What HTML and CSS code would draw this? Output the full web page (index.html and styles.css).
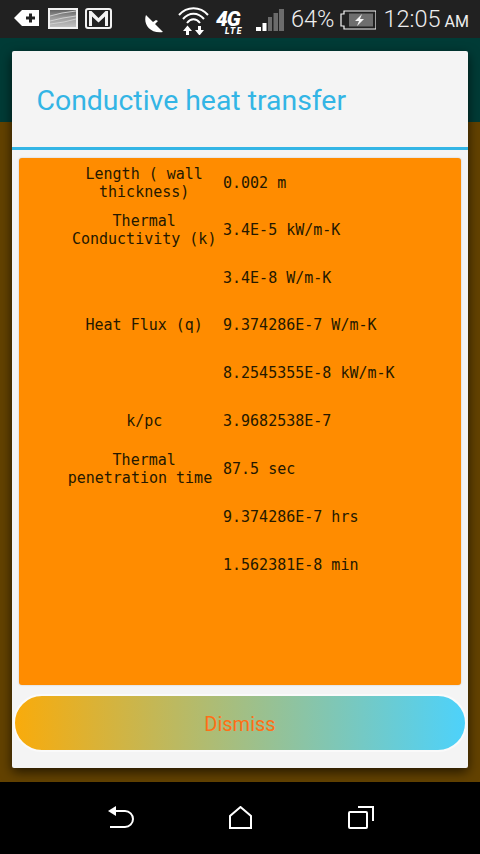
FILE: index.html
```html
<!DOCTYPE html>
<html lang="en">
<head>
<meta charset="utf-8">
<title>Conductive heat transfer</title>
<link rel="stylesheet" href="styles.css">
</head>
<body>
<header class="status">
  <svg class="ic ic-tag" width="26" height="18" viewBox="0 0 26 18"><path d="M8 1h17v16H8L0 9z" fill="#fff"/><path d="M15 4.500h3v3h3v3h-3v3h-3v-3h-3v-3h3z" fill="#222"/></svg>
  <svg class="ic ic-photo" width="30" height="21" viewBox="0 0 30 21"><defs><linearGradient id="ph" x1="0" y1="0" x2="0" y2="1"><stop offset="0" stop-color="#5c5c5c"/><stop offset=".45" stop-color="#9a9a9a"/><stop offset="1" stop-color="#c4c4c4"/></linearGradient></defs><rect x="1" y="1" width="28" height="19" fill="url(#ph)" stroke="#f2f2f2" stroke-width="2"/><path d="M2 8 14 5l14-2M2 13l13-3 13-2M2 16l14-2 12-3" stroke="#d0d0d0" fill="none"/></svg>
  <svg class="ic ic-mail" width="27" height="21" viewBox="0 0 27 21"><rect x="1" y="1" width="25" height="19" rx="2" fill="none" stroke="#f2f2f2" stroke-width="2"/><path d="M4 18V3h2.500l7 7 7-7H23v15h-3V8.500l-6.500 6-6.500-6V18z" fill="#f2f2f2"/></svg>
  <svg class="ic ic-dish" width="20" height="20" viewBox="0 0 20 20"><path d="M2 1C-1 9 5 20 19 18L11 10l3-3-2-1-3 2z" fill="#fff"/></svg>
  <svg class="ic ic-wifi" width="31" height="31" viewBox="0 0 31 31"><g fill="none" stroke="#fff" stroke-width="2"><path d="M1 11C9 2 22 2 30 11"/><path d="M5 15C11 8 20 8 26 15"/><path d="M9 19C13 14 18 14 22 19"/></g><path d="M5 27l4.500-5.500L14 27h-3v4H8v-4zM17 26h3v-4h3v4h3l-4.500 5.500z" fill="#fff"/></svg>
  <div class="net"><span class="net-4g">4G</span><span class="net-lte">LTE</span></div>
  <svg class="ic ic-signal" width="28" height="22" viewBox="0 0 28 22"><path d="M0 18h5v4H0zM6.500 14h4v8h-4z" fill="#fff"/><path d="M12 8h4v14h-4zM17.500 4H22v18h-4.500zM23 0h5v22h-5z" fill="#6b6b6b"/></svg>
  <span class="pct">64%</span>
  <svg class="ic ic-batt" width="36" height="20" viewBox="0 0 36 20"><path d="M4 1h32v18H4v-3H1V4h3z" fill="none" stroke="#f5f5f5" stroke-width="1.200"/><rect x="9" y="3.500" width="24" height="13" fill="#6e6e6e"/><path d="M22 4l-7 7h4l-2 5 7-7h-4z" fill="#f5f5f5"/></svg>
  <span class="clock">12:05<span class="ampm"> AM</span></span>
</header>

<main class="screen">
  <div class="band"></div>
  <section class="dialog">
    <h1 class="title">Conductive heat transfer</h1>
    <div class="rule"></div>
    <div class="panel">
      <div class="row row-first"><div class="label">Length ( wall<br>thickness)</div><div class="value">0.002 m</div></div>
      <div class="row"><div class="label">Thermal<br>Conductivity (k)</div><div class="value">3.4E-5 kW/m-K</div></div>
      <div class="row"><div class="label"></div><div class="value">3.4E-8 W/m-K</div></div>
      <div class="row"><div class="label">Heat Flux (q)</div><div class="value">9.374286E-7 W/m-K</div></div>
      <div class="row"><div class="label"></div><div class="value">8.2545355E-8 kW/m-K</div></div>
      <div class="row"><div class="label">k/pc</div><div class="value">3.9682538E-7</div></div>
      <div class="row"><div class="label">Thermal<br>penetration time&nbsp;</div><div class="value">87.5 sec</div></div>
      <div class="row"><div class="label"></div><div class="value">9.374286E-7 hrs</div></div>
      <div class="row"><div class="label"></div><div class="value">1.562381E-8 min</div></div>
    </div>
    <button class="dismiss" type="button">Dismiss</button>
  </section>
</main>

<nav class="navbar">
  <svg width="26" height="23" viewBox="0 0 26 23"><path d="M7 5h10a8 8 0 0 1 0 16H2" fill="none" stroke="#fff" stroke-width="2"/><path d="M0 5l8-5v10z" fill="#fff"/></svg>
  <svg width="23" height="23" viewBox="0 0 23 23"><path d="M1 22V10L11.500 1 22 10v12z" fill="none" stroke="#fff" stroke-width="2"/></svg>
  <svg width="26" height="23" viewBox="0 0 26 23"><rect x="1" y="6" width="18" height="16" rx="1" fill="none" stroke="#fff" stroke-width="2"/><path d="M10 1h15v14" fill="none" stroke="#fff" stroke-width="2"/></svg>
</nav>
</body>
</html>
```
FILE: styles.css
```css
* { box-sizing: border-box; }
html, body { margin: 0; padding: 0; }
body {
  width: 480px;
  height: 854px;
  overflow: hidden;
  display: flex;
  flex-direction: column;
  background: #000;
  font-family: Roboto, sans-serif;
}
.status {
  height: 38px;
  flex: none;
  background: #212121;
  display: flex;
  align-items: flex-start;
  color: #eee;
  font-weight: 300;
}
.ic { flex: none; display: block; }
.ic-tag { margin: 9px 0 0 14px; }
.ic-photo { margin: 8px 0 0 8px; }
.ic-mail { margin: 8px 0 0 7px; }
.ic-dish { margin: 14px 0 0 32px; }
.ic-wifi { margin: 4px 0 0 14px; }
.net { flex: none; width: 30px; margin: 8px 0 0 7px; height: 28px; position: relative; color: #fff; font-style: italic; font-weight: 900; }
.net-4g { position: absolute; display: block; left: 0; top: 4px; font-size: 21px; line-height: 15px; letter-spacing: -1px; }
.net-lte { position: absolute; display: block; left: 9px; top: 20px; font-size: 8.500px; line-height: 7px; letter-spacing: 1.500px; }
.ic-signal { margin: 9px 0 0 10px; }
.pct { margin: 5px 0 0 7px; font-size: 23.500px; line-height: 28px; }
.ic-batt { margin: 10px 0 0 6px; }
.clock { margin: 5px 0 0 7px; font-size: 23.500px; line-height: 28px; white-space: nowrap; }
.ampm { font-size: 16px; font-weight: 400; }

.screen {
  flex: 1;
  position: relative;
  background: #634200;
  min-height: 0;
}
.band { height: 84px; background: #003b36; }
.dialog {
  position: absolute;
  left: 12px;
  top: 13px;
  width: 456px;
  height: 717px;
  background: #f4f4f4;
  border-radius: 2px;
  box-shadow: 0 4px 12px rgba(0,0,0,.65);
  display: flex;
  flex-direction: column;
  align-items: stretch;
}
.title {
  margin: 0;
  height: 96px;
  padding: 0 0 0 24.500px;
  font-size: 28.400px;
  font-weight: 400;
  line-height: 100px;
  color: #33b5e5;
}
.rule { height: 3px; background: #33b5e5; flex: none; }
.panel {
  margin: 8px 7px 0;
  height: 527px;
  background: #ff8c00;
  border-radius: 3px;
  font-family: "DejaVu Sans Mono", monospace;
  font-size: 15px;
  line-height: 18px;
  color: #241800;
  box-shadow: 0 0 2px rgba(0,0,0,.2);
}
.row {
  height: 47.850px;
  display: grid;
  grid-template-columns: 153px 1fr;
  column-gap: 2.300px;
  padding-left: 48.700px;
  align-items: center;
}
.row-first { padding-top: 2px; }
.label { text-align: center; white-space: nowrap; }
.value { white-space: nowrap; }
.dismiss {
  margin: 9px 1px 0;
  height: 58px;
  border: 2px solid #fafafa;
  border-radius: 29px;
  background: linear-gradient(90deg, #f9ab0b, #4dd2fb);
  color: #ff6f16;
  font-family: Roboto, sans-serif;
  font-size: 20px;
  padding: 1px 0 0;
}
.navbar {
  height: 72px;
  flex: none;
  background: #000;
  display: flex;
  align-items: flex-start;
  padding: 24px 0 0 108px;
}
.navbar svg { display: block; flex: none; }
.navbar svg:nth-child(2) { margin-left: 95px; }
.navbar svg:nth-child(3) { margin-left: 96px; }
```
